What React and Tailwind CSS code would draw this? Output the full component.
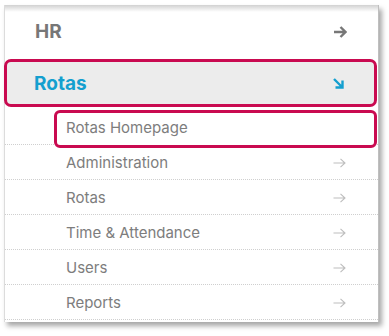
import React from "react";

function ThinArrow() {
  return (
    <svg width="13" height="10" viewBox="0 0 13 10" className="block">
      <path d="M0.5 5H12M7.5 0.8L12 5L7.5 9.2" fill="none" stroke="#bdbdbd" strokeWidth="1.1" />
    </svg>
  );
}

const items = ["Administration", "Rotas", "Time & Attendance", "Users", "Reports"];

export default function App() {
  return (
    <div className="w-[389px] h-[336px] bg-white pt-[5px] pl-[4px]" style={{ fontFamily: "Inter, 'Noto Sans', sans-serif" }}>
      <div className="relative w-[375px] h-[317px] bg-white border-l border-[#dcdcdc] border-r border-r-[#bfbfbf] shadow-[3px_4px_5px_rgba(0,0,0,0.35)] flex flex-col">
        <div className="pointer-events-none absolute inset-x-0 top-0 h-[7px] bg-gradient-to-b from-[rgba(0,0,0,0.18)] to-transparent" />
        <div className="h-[52px] flex items-center justify-between pl-[30px] pr-[31px] pt-[2px]">
          <span className="text-[19px] font-bold text-[#777]">HR</span>
          <svg width="13" height="12" viewBox="0 0 13 12" className="block">
            <path d="M0 6H11.5M6.5 1L11.5 6L6.5 11" fill="none" stroke="#777" strokeWidth="2.4" />
          </svg>
        </div>
        <div className="mt-[2px] h-[48px] -ml-[1px] mr-[1px] rounded-[7px] border-[3px] border-[#c90a50] bg-[#ececec] flex items-center justify-between pl-[27px] pr-[30px] pt-[3px]">
          <span className="text-[19px] font-bold text-[#149fcf]">Rotas</span>
          <svg width="11" height="11" viewBox="0 0 11 11" className="block -mt-[2px]">
            <path d="M1 1L9.5 9.5M2.5 9.5H9.5V2.5" fill="none" stroke="#149fcf" strokeWidth="2.4" />
          </svg>
        </div>
        <div className="mt-[3px] h-[35px] border-b border-dotted border-[#cfcfcf] flex">
          <div className="relative z-10 ml-[49px] mr-[1px] flex-1 h-[38px] rounded-[6px] border-[3px] border-[#c90a50] bg-white flex items-center pl-[9px]">
            <span className="text-[15px] text-[#7d7d7d] -mt-[2px]">Rotas Homepage</span>
          </div>
        </div>
        {items.map((t) => (
          <div key={t} className="h-[35px] border-b border-dotted border-[#cfcfcf] flex items-center justify-between pl-[61px] pr-[32px] pt-[2px]">
            <span className="text-[15px] text-[#7d7d7d]">{t}</span>
            <ThinArrow />
          </div>
        ))}
      </div>
    </div>
  );
}
